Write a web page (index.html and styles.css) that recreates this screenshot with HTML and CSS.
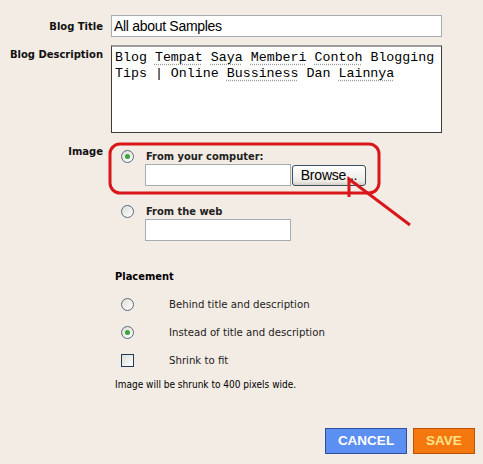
FILE: index.html
```html
<!DOCTYPE html>
<html lang="en">
<head>
  <meta charset="UTF-8" />
  <title>Blog Settings</title>
  <link rel="stylesheet" href="styles.css">
</head>
<body>
  <div class="page">
    <div class="row row-title">
      <div class="lbl">Blog Title</div>
      <div class="textbox title-box">All about Samples</div>
    </div>

    <div class="row row-desc">
      <div class="lbl">Blog Description</div>
      <div class="textarea">Blog <span class="sp">Tempat</span> <span class="sp">Saya</span> <span class="sp">Memberi</span> <span class="sp">Contoh</span> Blogging Tips | Online <span class="sp">Bussiness</span> Dan <span class="sp">Lainnya</span></div>
    </div>

    <div class="row row-image">
      <div class="lbl lbl-image">Image</div>
      <div class="image-opts">
        <div class="opt">
          <span class="radio checked"></span>
          <span class="opt-text">From your computer:</span>
        </div>
        <div class="file-row">
          <div class="textbox small-box"></div>
          <div class="browse">Browse...</div>
        </div>
        <div class="opt opt-web">
          <span class="radio"></span>
          <span class="opt-text">From the web</span>
        </div>
        <div class="file-row">
          <div class="textbox small-box"></div>
        </div>

        <div class="placement">
          <div class="place-title">Placement</div>
          <div class="place-opt">
            <span class="radio"></span>
            <span>Behind title and description</span>
          </div>
          <div class="place-opt">
            <span class="radio checked"></span>
            <span>Instead of title and description</span>
          </div>
          <div class="place-opt">
            <span class="check"></span>
            <span>Shrink to fit</span>
          </div>
          <div class="note">Image will be shrunk to 400 pixels wide.</div>
        </div>
      </div>
    </div>

    <div class="actions">
      <div class="btn btn-cancel">CANCEL</div>
      <div class="btn btn-save">SAVE</div>
    </div>

    <svg class="mark" width="483" height="464" viewBox="0 0 483 464">
      <rect x="110" y="144" width="269" height="49" rx="10" ry="10" fill="none" stroke="#d9161a" stroke-width="3"/>
      <path d="M410 225 L349 179 L349 197" fill="none" stroke="#d9161a" stroke-width="3"/>
    </svg>
  </div>
</body>
</html>
```

FILE: styles.css
```css
body {
  margin: 0;
  background-color: #f3ece4;
  font-family: 'DejaVu Sans Condensed', 'DejaVu Sans', sans-serif;
  font-size: 11px;
  color: #000000;
}

.page {
  position: relative;
  width: 483px;
  height: 464px;
  padding-top: 15px;
  box-sizing: border-box;
}

.row {
  display: grid;
  grid-template-columns: 103px 331px;
  column-gap: 8px;
}

.lbl {
  text-align: right;
  font-weight: bold;
  font-size: 11.1px;
  color: #111111;
}

.row-title {
  align-items: center;
}

.textbox {
  background-color: #ffffff;
  border: 1px solid #a5acb2;
  box-sizing: border-box;
}

.title-box {
  height: 22px;
  padding: 1px 2px 0;
  font-family: 'Liberation Sans', Arial, sans-serif;
  font-size: 14px;
  line-height: 19px;
  letter-spacing: -0.3px;
}

.row-desc {
  margin-top: 8px;
}

.row-desc .lbl {
  padding-top: 3px;
}

.textarea {
  height: 88px;
  box-sizing: border-box;
  background-color: #ffffff;
  border: 1px solid #3c3c3c;
  border-top: 2px solid #9c9c9c;
  padding: 3px 3px;
  font-family: 'Liberation Mono', 'Courier New', monospace;
  font-size: 13.3px;
  line-height: 16px;
}

.sp {
  text-decoration: underline dotted #9a9a9a;
  text-underline-offset: 3px;
}

.row-image {
  margin-top: 16px;
}

.lbl-image {
  margin-top: -4px;
}

.opt {
  display: flex;
  align-items: center;
  height: 14px;
}

.opt-text {
  font-weight: bold;
  color: #222222;
}

.radio {
  width: 11px;
  height: 11px;
  margin-left: 10px;
  margin-right: 12px;
  border: 1px solid #5a6a7c;
  border-radius: 50%;
  background: linear-gradient(135deg, #dcdcd6, #ffffff);
  display: flex;
  align-items: center;
  justify-content: center;
  flex: none;
}

.radio.checked::after {
  content: "";
  width: 5px;
  height: 5px;
  border-radius: 50%;
  background-color: #3aa53a;
}

.check {
  width: 11px;
  height: 11px;
  margin-left: 10px;
  margin-right: 12px;
  border: 1px solid #1c3e5a;
  background: linear-gradient(135deg, #dcdcd6, #ffffff);
  flex: none;
}

.file-row {
  display: flex;
  align-items: center;
  margin-top: 1px;
  padding-left: 34px;
}

.small-box {
  width: 146px;
  height: 22px;
}

.browse {
  margin-left: 1px;
  width: 74px;
  height: 21px;
  box-sizing: border-box;
  border: 1px solid #3b4f63;
  border-radius: 3px;
  background: linear-gradient(#ffffff, #ecebe6 80%, #d6d0c5);
  font-family: 'Liberation Sans', Arial, sans-serif;
  font-size: 14px;
  line-height: 19px;
  text-align: center;
  letter-spacing: -0.2px;
}

.opt-web {
  margin-top: 18px;
}

.placement {
  margin-top: 29px;
}

.place-title {
  padding-left: 4px;
  font-weight: bold;
  height: 14px;
  line-height: 14px;
}

.place-opt {
  display: flex;
  align-items: center;
  height: 14px;
  margin-top: 13px;
  font-size: 11.3px;
  color: #222222;
}

.place-opt .radio,
.place-opt .check {
  margin-right: 35px;
}

.place-opt + .place-opt {
  margin-top: 14px;
}

.place-opt:last-of-type {
  margin-top: 15px;
}

.note {
  margin-top: 12px;
  padding-left: 4px;
  font-size: 10px;
}

.actions {
  display: flex;
  justify-content: flex-end;
  gap: 6px;
  margin-top: 38px;
  padding-right: 8px;
}

.btn {
  height: 26px;
  box-sizing: border-box;
  font-family: 'Liberation Sans', Arial, sans-serif;
  font-weight: bold;
  font-size: 13.5px;
  line-height: 24px;
  text-align: center;
}

.btn-cancel {
  width: 82px;
  background-color: #5c8ff2;
  border: 1px solid #2f4f9c;
  color: #ffffff;
}

.btn-save {
  width: 62px;
  background-color: #f5780f;
  border: 1px solid #b85207;
  color: #ffe38a;
}

.mark {
  position: absolute;
  left: 0;
  top: 0;
  pointer-events: none;
}
```
